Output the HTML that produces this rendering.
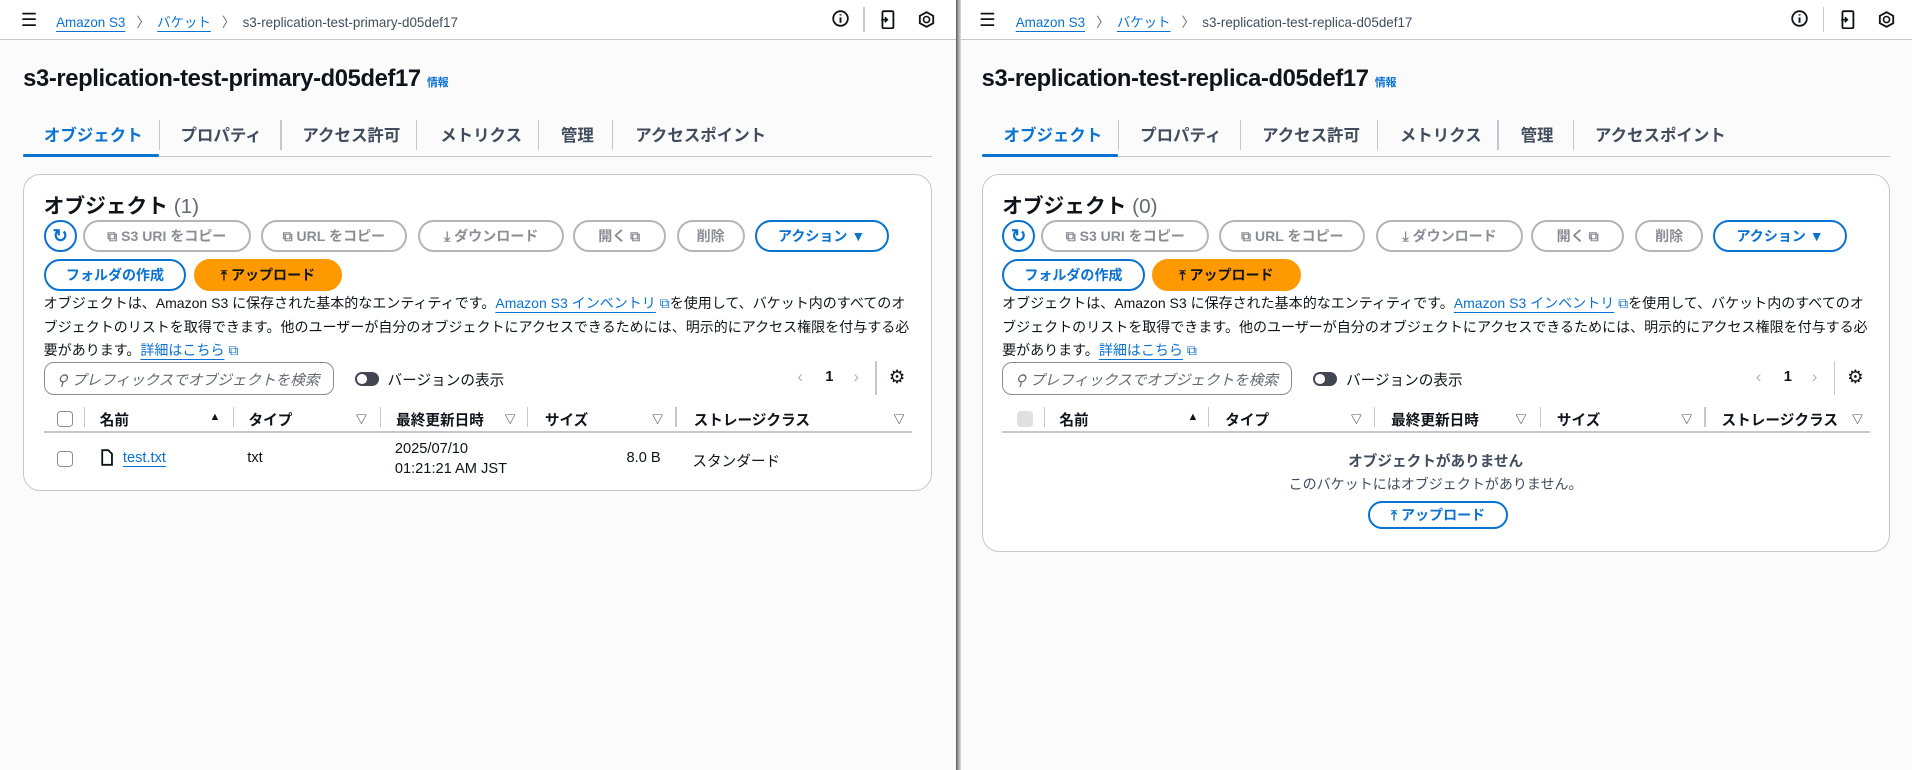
<!DOCTYPE html>
<html><head><meta charset="utf-8"><style>
*{box-sizing:border-box;margin:0;padding:0}
html,body{width:1912px;height:770px;overflow:hidden;background:#fbfbfb}
body{font-family:"Liberation Sans","Noto Sans CJK JP",sans-serif;color:#0f141a}
#root{zoom:1.2194;width:1568px;height:632px;position:relative}
.pane{position:absolute;top:0;height:632px;background:#fbfbfb;overflow:hidden}
.hdr{position:absolute;left:0;top:0;right:0;height:33px;background:#fff;border-bottom:1px solid #c6c6cd}
.a{position:absolute;white-space:nowrap}
.bc{font-size:11px;top:9px}
.lnk{color:#0972d3;text-decoration:underline;text-underline-offset:3px}
.title{left:19px;top:53px;font-size:19.5px;font-weight:700;letter-spacing:-.3px}
.info{font-size:9px;color:#0972d3;font-weight:700}
.tab{top:100px;font-size:13.5px;font-weight:700;color:#414d5c}
.tsep{top:98px;width:1px;height:25px;background:#c6c6cd}
.card{position:absolute;left:19px;width:745px;top:143px;background:#fff;border:1px solid #c6c6cd;border-radius:14px}
.btn{position:absolute;top:37px;height:26px;border:2px solid #b4b4bb;border-radius:14px;font-size:11.5px;font-weight:700;color:#8c8c94;display:flex;align-items:center;justify-content:center;gap:5px;background:#fff}
.blue{border-color:#0972d3;color:#0972d3}
.or{background:#ff9900;border-color:#ff9900;color:#0f141a}
.p{left:16px;width:715px;top:96px;font-size:11.5px;line-height:19px;white-space:normal;color:#0f141a}
.th{top:192px;font-size:12px;font-weight:700}
.dv{top:190px;width:1px;height:16px;background:#c6c6cd}
.tri{top:193px;font-size:9px;color:#0f141a}
.cb{width:13px;height:13px;border:1.5px solid #8c8c94;border-radius:3px}
</style></head><body><div id="root">

<!-- LEFT -->
<div class="pane" style="left:0;width:785px">
 <div class="hdr">
  <div class="a" style="left:17px;top:9px;font-size:15px;line-height:14px">☰</div>
  <div class="a bc" style="left:46px"><span class="lnk">Amazon S3</span> <span style="color:#656871;margin:0 6px">〉</span><span class="lnk">バケット</span> <span style="color:#656871;margin:0 6px">〉</span><span style="color:#414d5c">s3-replication-test-primary-d05def17</span></div>
  <svg class="a" style="left:682px;top:8px" width="14" height="14" viewBox="0 0 14 14"><circle cx="7" cy="7" r="6" fill="none" stroke="#0f141a" stroke-width="1.5"/><path d="M7 6v4.5M7 3.5v1" stroke="#0f141a" stroke-width="1.6"/></svg>
  <div class="a" style="left:708px;top:6px;width:1px;height:20px;background:#c6c6cd"></div>
  <svg class="a" style="left:722px;top:8px" width="12" height="16" viewBox="0 0 12 16"><rect x="2" y="1" width="9" height="14" rx="1" fill="none" stroke="#0f141a" stroke-width="1.5"/><path d="M1 8h5M4 6l2 2-2 2" stroke="#0f141a" stroke-width="1.4" fill="none"/></svg>
  <svg class="a" style="left:753px;top:9px" width="14" height="14" viewBox="0 0 14 14"><path d="M7 1l5.5 3v6L7 13 1.5 10V4z" fill="none" stroke="#0f141a" stroke-width="1.5"/><circle cx="7" cy="7" r="2.5" fill="none" stroke="#0f141a" stroke-width="1.3"/></svg>
 </div>
 <div class="a title">s3-replication-test-primary-d05def17 <span class="info">情報</span></div>
 <div class="a tab" style="left:36px;color:#0972d3">オブジェクト</div>
 <div class="a tsep" style="left:130px"></div>
 <div class="a tab" style="left:148px">プロパティ</div>
 <div class="a tsep" style="left:230px"></div>
 <div class="a tab" style="left:248px">アクセス許可</div>
 <div class="a tsep" style="left:341px"></div>
 <div class="a tab" style="left:361px">メトリクス</div>
 <div class="a tsep" style="left:441px"></div>
 <div class="a tab" style="left:460px">管理</div>
 <div class="a tsep" style="left:502px"></div>
 <div class="a tab" style="left:521px">アクセスポイント</div>
 <div class="a" style="left:19px;top:128px;width:745px;height:1px;background:#c6c6cd"></div>
 <div class="a" style="left:19px;top:126px;width:111px;height:3px;background:#0972d3;border-radius:2px"></div>

 <div class="card" style="height:260px">
  <div class="a" style="left:16px;top:11px;font-size:17px;font-weight:700">オブジェクト <span style="font-weight:400;color:#656871">(1)</span></div>
  <div class="btn blue" style="left:16px;width:27px;font-size:15px">↻</div>
  <div class="btn" style="left:48px;width:138px">⧉ S3 URI をコピー</div>
  <div class="btn" style="left:194px;width:120px">⧉ URL をコピー</div>
  <div class="btn" style="left:323px;width:120px">⤓ ダウンロード</div>
  <div class="btn" style="left:450px;width:76px">開く ⧉</div>
  <div class="btn" style="left:535px;width:56px">削除</div>
  <div class="btn blue" style="left:599px;width:110px">アクション ▼</div>
  <div class="btn blue" style="left:16px;top:69px;width:117px">フォルダの作成</div>
  <div class="btn or" style="left:139px;top:69px;width:122px">⤒ アップロード</div>
  <div class="a p">オブジェクトは、Amazon S3 に保存された基本的なエンティティです。<span class="lnk">Amazon S3 インベントリ</span> <span style="color:#0972d3">⧉</span>を使用して、バケット内のすべてのオブジェクトのリストを取得できます。他のユーザーが自分のオブジェクトにアクセスできるためには、明示的にアクセス権限を付与する必要があります。<span class="lnk">詳細はこちら</span> <span style="color:#0972d3">⧉</span></div>
  <div class="a" style="left:16px;top:153px;width:238px;height:27px;border:1px solid #8c8c94;border-radius:8px;font-size:12px;color:#656871;font-style:italic;padding:5px 0 0 10px">⚲ プレフィックスでオブジェクトを検索</div>
  <div class="a" style="left:271px;top:161px;width:20px;height:12px;border-radius:6px;background:#424650"><div style="width:8px;height:8px;border-radius:4px;background:#fff;margin:2px"></div></div>
  <div class="a" style="left:298px;top:159px;font-size:12px">バージョンの表示</div>
  <div class="a" style="left:634px;top:157px;font-size:14px;color:#b4b4bb">‹</div>
  <div class="a" style="left:657px;top:159px;font-size:12px;font-weight:700">1</div>
  <div class="a" style="left:680px;top:157px;font-size:14px;color:#b4b4bb">›</div>
  <div class="a" style="left:698px;top:152px;width:1px;height:28px;background:#c6c6cd"></div>
  <div class="a" style="left:709px;top:156px;font-size:15px">⚙</div>
  <div class="a cb" style="left:27px;top:193px"></div>
  <div class="a dv" style="left:49px"></div>
  <div class="a th" style="left:62px">名前</div><div class="a tri" style="left:152px">▲</div>
  <div class="a dv" style="left:171px"></div>
  <div class="a th" style="left:184px">タイプ</div><div class="a tri" style="left:272px">▽</div>
  <div class="a dv" style="left:292px"></div>
  <div class="a th" style="left:305px">最終更新日時</div><div class="a tri" style="left:394px">▽</div>
  <div class="a dv" style="left:412px"></div>
  <div class="a th" style="left:427px">サイズ</div><div class="a tri" style="left:515px">▽</div>
  <div class="a dv" style="left:534px"></div>
  <div class="a th" style="left:549px">ストレージクラス</div><div class="a tri" style="left:713px">▽</div>
  <div class="a" style="left:16px;top:210px;width:712px;height:1px;background:#c6c6cd"></div>
  <div class="a cb" style="left:27px;top:226px"></div>
  <svg class="a" style="left:63px;top:224px" width="10" height="14" viewBox="0 0 10 14"><path d="M1 1h5l3 3v9H1z" fill="none" stroke="#0f141a" stroke-width="1.5"/></svg>
  <div class="a lnk" style="left:81px;top:225px;font-size:12px">test.txt</div>
  <div class="a" style="left:183px;top:225px;font-size:12px">txt</div>
  <div class="a" style="left:304px;top:216px;font-size:12px;line-height:17px">2025/07/10<br>01:21:21 AM JST</div>
  <div class="a" style="left:494px;top:225px;font-size:12px">8.0 B</div>
  <div class="a" style="left:548px;top:225px;font-size:12px">スタンダード</div>
 </div>
</div>

<div class="a" style="left:784px;top:0;width:4px;height:632px;background:linear-gradient(90deg,#555,#999 40%,#ddd)"></div>

<!-- RIGHT -->
<div class="pane" style="left:788px;width:780px">
 <div class="hdr">
  <div class="a" style="left:15px;top:9px;font-size:15px;line-height:14px">☰</div>
  <div class="a bc" style="left:45px"><span class="lnk">Amazon S3</span> <span style="color:#656871;margin:0 6px">〉</span><span class="lnk">バケット</span> <span style="color:#656871;margin:0 6px">〉</span><span style="color:#414d5c">s3-replication-test-replica-d05def17</span></div>
  <svg class="a" style="left:681px;top:8px" width="14" height="14" viewBox="0 0 14 14"><circle cx="7" cy="7" r="6" fill="none" stroke="#0f141a" stroke-width="1.5"/><path d="M7 6v4.5M7 3.5v1" stroke="#0f141a" stroke-width="1.6"/></svg>
  <div class="a" style="left:707px;top:6px;width:1px;height:20px;background:#c6c6cd"></div>
  <svg class="a" style="left:721px;top:8px" width="12" height="16" viewBox="0 0 12 16"><rect x="2" y="1" width="9" height="14" rx="1" fill="none" stroke="#0f141a" stroke-width="1.5"/><path d="M1 8h5M4 6l2 2-2 2" stroke="#0f141a" stroke-width="1.4" fill="none"/></svg>
  <svg class="a" style="left:752px;top:9px" width="14" height="14" viewBox="0 0 14 14"><path d="M7 1l5.5 3v6L7 13 1.5 10V4z" fill="none" stroke="#0f141a" stroke-width="1.5"/><circle cx="7" cy="7" r="2.5" fill="none" stroke="#0f141a" stroke-width="1.3"/></svg>
 </div>
 <div class="a title" style="left:17px">s3-replication-test-replica-d05def17 <span class="info">情報</span></div>
 <div class="a tab" style="left:35px;color:#0972d3">オブジェクト</div>
 <div class="a tsep" style="left:129px"></div>
 <div class="a tab" style="left:147px">プロパティ</div>
 <div class="a tsep" style="left:229px"></div>
 <div class="a tab" style="left:247px">アクセス許可</div>
 <div class="a tsep" style="left:341px"></div>
 <div class="a tab" style="left:360px">メトリクス</div>
 <div class="a tsep" style="left:440px"></div>
 <div class="a tab" style="left:459px">管理</div>
 <div class="a tsep" style="left:502px"></div>
 <div class="a tab" style="left:520px">アクセスポイント</div>
 <div class="a" style="left:17px;top:128px;width:745px;height:1px;background:#c6c6cd"></div>
 <div class="a" style="left:17px;top:126px;width:112px;height:3px;background:#0972d3;border-radius:2px"></div>

 <div class="card" style="left:17px;height:310px">
  <div class="a" style="left:16px;top:11px;font-size:17px;font-weight:700">オブジェクト <span style="font-weight:400;color:#656871">(0)</span></div>
  <div class="btn blue" style="left:16px;width:27px;font-size:15px">↻</div>
  <div class="btn" style="left:48px;width:138px">⧉ S3 URI をコピー</div>
  <div class="btn" style="left:194px;width:120px">⧉ URL をコピー</div>
  <div class="btn" style="left:323px;width:120px">⤓ ダウンロード</div>
  <div class="btn" style="left:450px;width:76px">開く ⧉</div>
  <div class="btn" style="left:535px;width:56px">削除</div>
  <div class="btn blue" style="left:599px;width:110px">アクション ▼</div>
  <div class="btn blue" style="left:16px;top:69px;width:117px">フォルダの作成</div>
  <div class="btn or" style="left:139px;top:69px;width:122px">⤒ アップロード</div>
  <div class="a p">オブジェクトは、Amazon S3 に保存された基本的なエンティティです。<span class="lnk">Amazon S3 インベントリ</span> <span style="color:#0972d3">⧉</span>を使用して、バケット内のすべてのオブジェクトのリストを取得できます。他のユーザーが自分のオブジェクトにアクセスできるためには、明示的にアクセス権限を付与する必要があります。<span class="lnk">詳細はこちら</span> <span style="color:#0972d3">⧉</span></div>
  <div class="a" style="left:16px;top:153px;width:238px;height:27px;border:1px solid #8c8c94;border-radius:8px;font-size:12px;color:#656871;font-style:italic;padding:5px 0 0 10px">⚲ プレフィックスでオブジェクトを検索</div>
  <div class="a" style="left:271px;top:161px;width:20px;height:12px;border-radius:6px;background:#424650"><div style="width:8px;height:8px;border-radius:4px;background:#fff;margin:2px"></div></div>
  <div class="a" style="left:298px;top:159px;font-size:12px">バージョンの表示</div>
  <div class="a" style="left:634px;top:157px;font-size:14px;color:#b4b4bb">‹</div>
  <div class="a" style="left:657px;top:159px;font-size:12px;font-weight:700">1</div>
  <div class="a" style="left:680px;top:157px;font-size:14px;color:#b4b4bb">›</div>
  <div class="a" style="left:698px;top:152px;width:1px;height:28px;background:#c6c6cd"></div>
  <div class="a" style="left:709px;top:156px;font-size:15px">⚙</div>
  <div class="a cb" style="left:28px;top:193px;background:#e0e0e3;border-color:#e0e0e3"></div>
  <div class="a dv" style="left:50px"></div>
  <div class="a th" style="left:63px">名前</div><div class="a tri" style="left:168px">▲</div>
  <div class="a dv" style="left:185px"></div>
  <div class="a th" style="left:199px">タイプ</div><div class="a tri" style="left:302px">▽</div>
  <div class="a dv" style="left:321px"></div>
  <div class="a th" style="left:335px">最終更新日時</div><div class="a tri" style="left:437px">▽</div>
  <div class="a dv" style="left:457px"></div>
  <div class="a th" style="left:471px">サイズ</div><div class="a tri" style="left:573px">▽</div>
  <div class="a dv" style="left:592px"></div>
  <div class="a th" style="left:606px">ストレージクラス</div><div class="a tri" style="left:713px">▽</div>
  <div class="a" style="left:16px;top:210px;width:712px;height:1px;background:#c6c6cd"></div>
  <div class="a" style="left:0;width:743px;top:225px;text-align:center;font-size:12px;font-weight:700;color:#414d5c">オブジェクトがありません</div>
  <div class="a" style="left:0;width:743px;top:245px;text-align:center;font-size:11.5px;color:#414d5c">このバケットにはオブジェクトがありません。</div>
  <div class="btn blue" style="left:316px;top:267px;width:115px;height:23px">⤒ アップロード</div>
 </div>
</div>
</div></body></html>
